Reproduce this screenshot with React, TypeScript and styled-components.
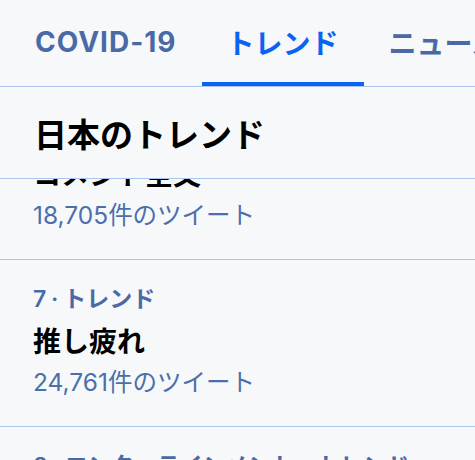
import React from "react";
import styled, { createGlobalStyle } from "styled-components";

const Global = createGlobalStyle`
  html, body { margin: 0; padding: 0; background: #f7f8fa; }
  body {
    font-family: "Inter", "Noto Sans CJK JP", sans-serif;
    -webkit-font-smoothing: antialiased;
  }
`;

const Page = styled.div`
  width: 475px;
  height: 460px;
  display: flex;
  flex-direction: column;
  overflow: hidden;
  background: #f7f8fa;
`;

const TabBar = styled.nav`
  display: flex;
  height: 86px;
  padding-left: 10px;
  border-bottom: 1px solid #abc5ef;
  flex-shrink: 0;
  white-space: nowrap;
`;

const Tab = styled.div<{ $active?: boolean; $tracking?: number }>`
  position: relative;
  display: flex;
  align-items: center;
  padding: 0 25px 3px;
  font-size: 28px;
  font-weight: 700;
  letter-spacing: ${(p) => p.$tracking ?? 0}px;
  color: ${(p) => (p.$active ? "#0a63f2" : "#4a6aa6")};
  &::after {
    content: "";
    display: ${(p) => (p.$active ? "block" : "none")};
    position: absolute;
    left: 0;
    right: 0;
    bottom: 0;
    height: 4px;
    background: #0a63f2;
  }
`;

const SectionHeader = styled.h2`
  margin: 0;
  height: 91px;
  display: flex;
  align-items: center;
  padding-left: 34px;
  font-size: 33px;
  font-weight: 700;
  color: #000;
  border-bottom: 1px solid #abc5ef;
  flex-shrink: 0;
`;

const Scroller = styled.div`
  flex: 1;
  overflow: hidden;
`;

const List = styled.div<{ $offset: number }>`
  margin-top: ${(p) => -p.$offset}px;
`;

const Item = styled.div`
  padding: 21px 33px 26px;
  border-bottom: 1px solid #abc5ef;
`;

const Label = styled.div`
  font-size: 23px;
  line-height: 36px;
  font-weight: 600;
  color: #4a6aa6;
  white-space: nowrap;
`;

const Dot = styled.span`
  margin: 0 -1px;
`;

const Title = styled.div`
  margin-top: 3px;
  font-size: 28px;
  line-height: 44px;
  font-weight: 700;
  color: #000;
`;

const Count = styled.div`
  font-size: 24.5px;
  line-height: 36px;
  color: #4c6fab;
`;

const trends = [
  { rank: 6, category: "トレンド", title: "コメント全文", count: "18,705" },
  { rank: 7, category: "トレンド", title: "推し疲れ", count: "24,761" },
  { rank: 8, category: "エンターテインメント・トレンド", title: "", count: "" },
];

export default function App() {
  return (
    <Page>
      <Global />
      <TabBar>
        <Tab $tracking={1}>COVID-19</Tab>
        <Tab $active>トレンド</Tab>
        <Tab>ニュース</Tab>
      </TabBar>
      <SectionHeader>日本のトレンド</SectionHeader>
      <Scroller>
        <List $offset={86}>
          {trends.map((t) => (
            <Item key={t.rank}>
              <Label>
                {t.rank} <Dot>·</Dot> {t.category}
              </Label>
              <Title>{t.title}</Title>
              <Count>{t.count}件のツイート</Count>
            </Item>
          ))}
        </List>
      </Scroller>
    </Page>
  );
}
